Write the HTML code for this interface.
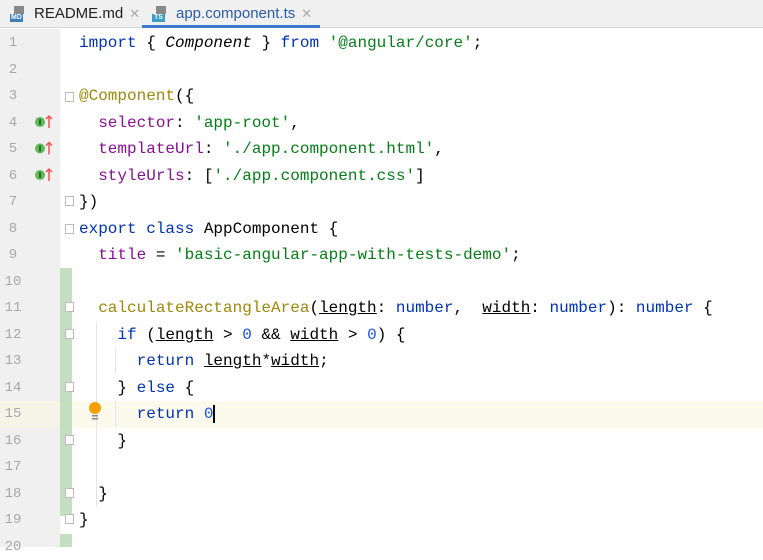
<!DOCTYPE html>
<html><head><style>
body{margin:0;width:763px;height:547px;overflow:hidden;background:#fff;font-family:"Liberation Sans",sans-serif;position:relative}
.tabs{position:absolute;left:0;top:0;width:763px;height:28px;background:#f0f0f0;border-bottom:1px solid #d6d6d6;box-sizing:border-box}
.tab{position:absolute;top:0;height:28px;font-size:15px;line-height:27px;color:#222}
.x{color:#aaa;font-size:13px;margin-left:6px}
.ico{display:inline-block;vertical-align:middle;width:20px;height:16px;position:relative;margin-right:4px}
.gut{position:absolute;left:0;top:29px;width:60px;height:518px;background:#f0f0f0}
.code{position:absolute;left:0;top:30px;width:763px;font-family:"Liberation Mono",monospace;font-size:16px}
.ln{height:26.5px;line-height:26.5px;position:relative;white-space:pre}
.num{position:absolute;left:0;width:26px;text-align:center;color:#a8a8a8;font-size:14px}
.t{position:absolute;left:79px}
.k{color:#0033b3}.s{color:#067d17}.d{color:#9e880d}.p{color:#871094}.n{color:#1750eb}.u{text-decoration:underline}
.i{font-style:italic}
.green{position:absolute;left:60px;width:12px;background:#c3dfc0}
.fold{position:absolute;left:65px;width:9px;height:10px;border:1px solid #bbb;background:#fff;box-sizing:border-box}
</style></head><body>
<div class="tabs">
<div class="tab" style="left:10px"><span class="ico"><span style="position:absolute;left:4px;top:0;width:10px;height:8px;background:#888"></span><span style="position:absolute;left:0;bottom:0;font-size:7px;background:#3b7fb8;color:#fff;line-height:8px;padding:0 1px;font-weight:bold">MD</span></span>README.md<span class="x">✕</span></div>
<div class="tab" style="left:152px;color:#2a5ca8"><span class="ico"><span style="position:absolute;left:4px;top:0;width:10px;height:8px;background:#888"></span><span style="position:absolute;left:0;bottom:0;font-size:7px;background:#3b9cc8;color:#fff;line-height:8px;padding:0 2px;font-weight:bold">TS</span></span>app.component.ts<span class="x">✕</span></div>
<div style="position:absolute;left:142px;top:25px;width:178px;height:3px;background:#3a7ad0"></div>
</div>
<div class="gut"></div>
<div style="position:absolute;left:0;top:401px;width:60px;height:26.5px;background:#f6f4e6"></div>
<div style="position:absolute;left:72px;top:401px;width:691px;height:26.5px;background:#fcfaed"></div>
<div class="green" style="top:268px;height:248px"></div>
<div class="green" style="top:534px;height:13px"></div>
<div style="position:absolute;left:96px;top:322px;width:1px;height:185px;background:#e4e4e4"></div>
<div style="position:absolute;left:115px;top:348px;width:1px;height:26px;background:#e4e4e4"></div>
<div style="position:absolute;left:115px;top:401px;width:1px;height:26px;background:#e4e4e4"></div>
<div class="fold" style="top:92px"></div>
<div class="fold" style="top:196px"></div>
<div class="fold" style="top:224px"></div>
<div class="fold" style="top:302px"></div>
<div class="fold" style="top:329px"></div>
<div class="fold" style="top:382px"></div>
<div class="fold" style="top:435px"></div>
<div class="fold" style="top:488px"></div>
<div class="fold" style="top:514px"></div>
<svg style="position:absolute;left:34px;top:114px" width="20" height="80">
<g><circle cx="6" cy="8" r="5" fill="#5fb85a"/><rect x="5" y="5" width="2" height="6" fill="#2d6a2a"/><path d="M15 14V2M12 5l3-3 3 3" stroke="#e55" stroke-width="1.5" fill="none"/></g>
<g transform="translate(0,26.5)"><circle cx="6" cy="8" r="5" fill="#5fb85a"/><rect x="5" y="5" width="2" height="6" fill="#2d6a2a"/><path d="M15 14V2M12 5l3-3 3 3" stroke="#e55" stroke-width="1.5" fill="none"/></g>
<g transform="translate(0,53)"><circle cx="6" cy="8" r="5" fill="#5fb85a"/><rect x="5" y="5" width="2" height="6" fill="#2d6a2a"/><path d="M15 14V2M12 5l3-3 3 3" stroke="#e55" stroke-width="1.5" fill="none"/></g>
</svg>
<svg style="position:absolute;left:88px;top:402px" width="14" height="18"><circle cx="7" cy="6" r="6" fill="#f4a000"/><rect x="4" y="13" width="6" height="1.5" fill="#888"/><rect x="4" y="16" width="6" height="1.5" fill="#888"/></svg>
<div class="code">
<div class="ln"><span class="num">1</span><span class="t"><span class="k">import</span> { <span class="i">Component</span> } <span class="k">from</span> <span class="s">'@angular/core'</span>;</span></div>
<div class="ln"><span class="num">2</span></div>
<div class="ln"><span class="num">3</span><span class="t"><span class="d">@Component</span>({</span></div>
<div class="ln"><span class="num">4</span><span class="t">  <span class="p">selector</span>: <span class="s">'app-root'</span>,</span></div>
<div class="ln"><span class="num">5</span><span class="t">  <span class="p">templateUrl</span>: <span class="s">'./app.component.html'</span>,</span></div>
<div class="ln"><span class="num">6</span><span class="t">  <span class="p">styleUrls</span>: [<span class="s">'./app.component.css'</span>]</span></div>
<div class="ln"><span class="num">7</span><span class="t">})</span></div>
<div class="ln"><span class="num">8</span><span class="t"><span class="k">export class</span> AppComponent {</span></div>
<div class="ln"><span class="num">9</span><span class="t">  <span class="p">title</span> = <span class="s">'basic-angular-app-with-tests-demo'</span>;</span></div>
<div class="ln"><span class="num">10</span></div>
<div class="ln"><span class="num">11</span><span class="t">  <span class="d">calculateRectangleArea</span>(<span class="u">length</span>: <span class="k">number</span>,  <span class="u">width</span>: <span class="k">number</span>): <span class="k">number</span> {</span></div>
<div class="ln"><span class="num">12</span><span class="t">    <span class="k">if</span> (<span class="u">length</span> &gt; <span class="n">0</span> &amp;&amp; <span class="u">width</span> &gt; <span class="n">0</span>) {</span></div>
<div class="ln"><span class="num">13</span><span class="t">      <span class="k">return</span> <span class="u">length</span>*<span class="u">width</span>;</span></div>
<div class="ln"><span class="num">14</span><span class="t">    } <span class="k">else</span> {</span></div>
<div class="ln"><span class="num">15</span><span class="t">      <span class="k">return</span> <span class="n">0</span><span style="display:inline-block;width:2px;height:18px;background:#000;vertical-align:middle"></span></span></div>
<div class="ln"><span class="num">16</span><span class="t">    }</span></div>
<div class="ln"><span class="num">17</span></div>
<div class="ln"><span class="num">18</span><span class="t">  }</span></div>
<div class="ln"><span class="num">19</span><span class="t">}</span></div>
<div class="ln"><span class="num">20</span></div>
</div>
</body></html>
